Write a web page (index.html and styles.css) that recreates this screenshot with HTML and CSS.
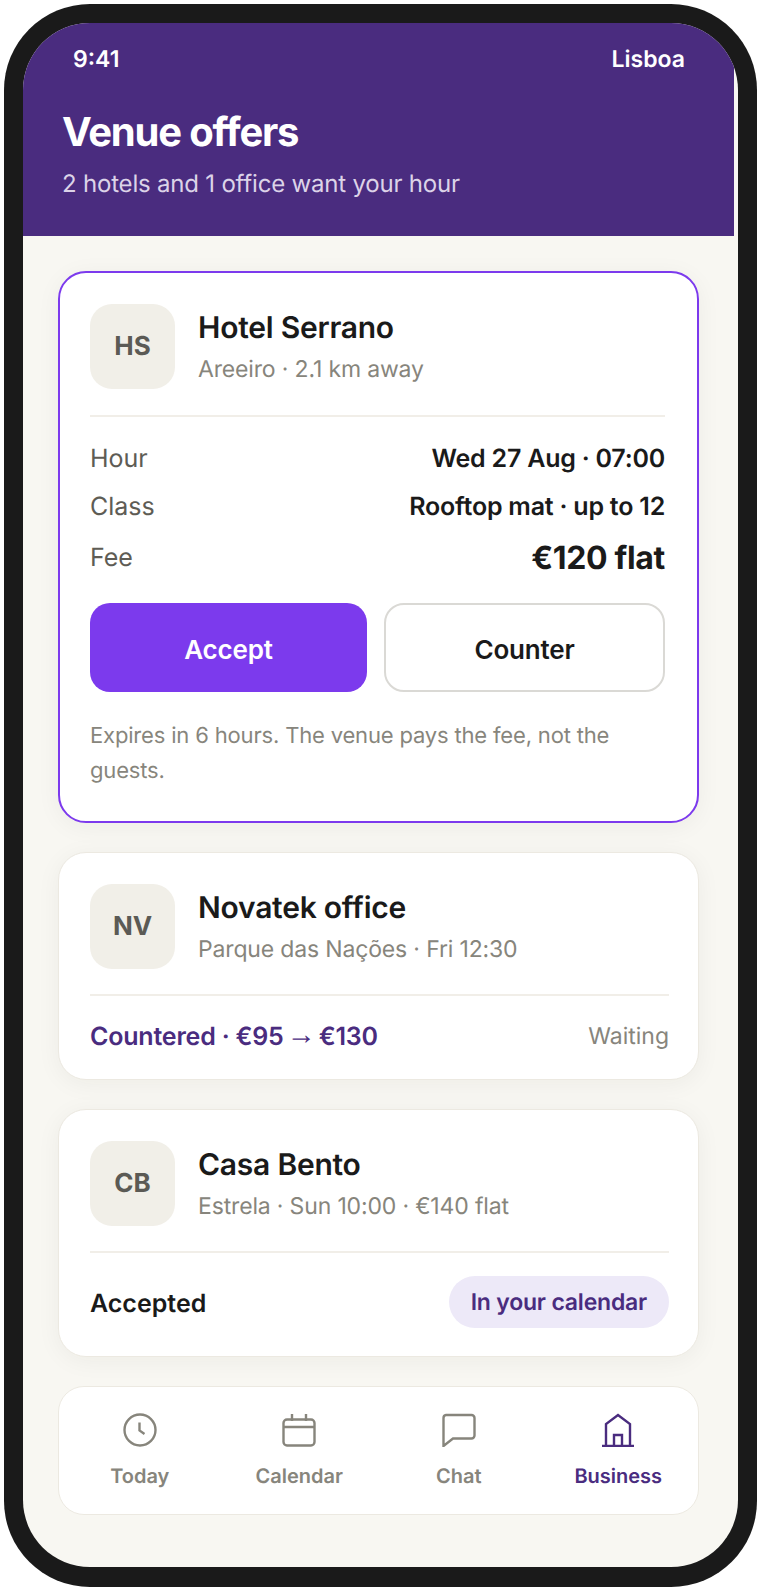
FILE: index.html
```html
<!DOCTYPE html>
<html lang="en">
<head>
    <meta charset="UTF-8">
    <meta name="viewport" content="width=device-width, initial-scale=1.0">
    <title>Venue offers</title>
    <link rel="stylesheet" href="styles.css">
</head>
<body>
    <div class="phone">
        <div class="screen">
            <!-- Purple header with status line -->
            <header class="top">
                <div class="status">
                    <span>9:41</span>
                    <span>Lisboa</span>
                </div>
                <h1>Venue offers</h1>
                <p class="lead">2 hotels and 1 office want your hour</p>
            </header>

            <main class="content">
                <section class="card card-main">
                    <div class="venue">
                        <div class="avatar">HS</div>
                        <div>
                            <div class="name">Hotel Serrano</div>
                            <div class="meta">Areeiro · 2.1 km away</div>
                        </div>
                    </div>
                    <div class="details">
                        <div class="line line-hour">
                            <span class="label">Hour</span>
                            <span class="value">Wed 27 Aug · 07:00</span>
                        </div>
                        <div class="line">
                            <span class="label">Class</span>
                            <span class="value">Rooftop mat · up to 12</span>
                        </div>
                        <div class="line line-fee">
                            <span class="label">Fee</span>
                            <span class="value fee">€120 flat</span>
                        </div>
                    </div>
                    <div class="actions">
                        <button class="btn btn-accept">Accept</button>
                        <button class="btn btn-counter">Counter</button>
                    </div>
                    <p class="note">Expires in 6 hours. The venue pays the fee, not the guests.</p>
                </section>

                <section class="card">
                    <div class="venue">
                        <div class="avatar">NV</div>
                        <div>
                            <div class="name">Novatek office</div>
                            <div class="meta">Parque das Nações · Fri 12:30</div>
                        </div>
                    </div>
                    <div class="outcome">
                        <span class="countered">Countered · €95 <span class="arrow">→</span> €130</span>
                        <span class="waiting">Waiting</span>
                    </div>
                </section>

                <section class="card">
                    <div class="venue">
                        <div class="avatar">CB</div>
                        <div>
                            <div class="name">Casa Bento</div>
                            <div class="meta">Estrela · Sun 10:00 · €140 flat</div>
                        </div>
                    </div>
                    <div class="outcome outcome-pill">
                        <span class="accepted">Accepted</span>
                        <span class="pill">In your calendar</span>
                    </div>
                </section>

                <!-- Bottom tabs -->
                <nav class="tabs">
                    <div class="tab">
                        <svg viewBox="0 0 34 34" width="34" height="34"><circle cx="17" cy="17" r="15.5"/><path d="M16.5 9.5V17.5L21.5 21"/></svg>
                        <span>Today</span>
                    </div>
                    <div class="tab">
                        <svg viewBox="0 0 34 34" width="34" height="34"><rect x="1.5" y="6.5" width="31" height="26" rx="3.5"/><path d="M1.5 14H32.5M10 1V8M24 1V8"/></svg>
                        <span>Calendar</span>
                    </div>
                    <div class="tab">
                        <svg viewBox="0 0 34 34" width="34" height="34"><path d="M4 2H29.5A3 3 0 0 1 32.5 5V22.5A3 3 0 0 1 29.5 25.5H11L1.5 33V5A3 3 0 0 1 4 2Z"/></svg>
                        <span>Chat</span>
                    </div>
                    <div class="tab tab-active">
                        <svg viewBox="0 0 34 34" width="34" height="34"><path d="M1 33H33M5 33V11L17 2L29 11V33M13 33V22H21V33"/></svg>
                        <span>Business</span>
                    </div>
                </nav>
            </main>
        </div>
    </div>
</body>
</html>
```

FILE: styles.css
```css
* {
    box-sizing: border-box;
}

body {
    margin: 0;
    background: #fff;
    font-family: Inter, "Liberation Sans", sans-serif;
    color: #1a1a1a;
    text-rendering: geometricPrecision;
}

.phone {
    width: 753px;
    height: 1583px;
    margin: 4px 0 0 4px;
    background: #1a1a1a;
    border-radius: 86px;
    padding: 19px 19px 20px;
}

.screen {
    height: 100%;
    background: #f8f7f2;
    border-radius: 67px;
    overflow: hidden;
    padding-right: 4px;
}

/* Header */
.top {
    height: 213px;
    background: #4a2c7f;
    color: #fff;
    padding: 22px 49px 0 39px;
}

.status {
    display: flex;
    justify-content: space-between;
    padding-left: 11px;
    font-size: 23px;
    font-weight: 600;
    line-height: 29px;
}

.top h1 {
    margin: 33px 0 0;
    font-size: 40px;
    font-weight: 700;
    line-height: 50px;
    letter-spacing: -1.2px;
}

.lead {
    margin: 12px 0 0;
    font-size: 24px;
    line-height: 30px;
    letter-spacing: -0.2px;
    color: #dcd3e8;
}

/* Cards */
.content {
    padding: 35px 35px 0;
    display: flex;
    flex-direction: column;
    gap: 29px;
}

.card {
    background: #fff;
    border: 1px solid #ece9e1;
    border-radius: 28px;
    padding: 31px 29px 0 31px;
    box-shadow: 0 4px 24px rgba(40, 35, 20, 0.05);
}

.card-main {
    height: 552px;
    border: 2px solid #7c3aed;
    padding: 31px 32px 0 30px;
}

.venue {
    display: flex;
    align-items: center;
    gap: 23px;
    padding-bottom: 25px;
    border-bottom: 2px solid #f1eee8;
}

.card-main .venue {
    padding-bottom: 26px;
}

.avatar {
    width: 85px;
    height: 85px;
    border-radius: 22px;
    background: #f1efe8;
    color: #5b5a55;
    font-size: 26px;
    font-weight: 700;
    display: flex;
    align-items: center;
    justify-content: center;
}

.name {
    font-size: 30px;
    font-weight: 600;
    line-height: 38px;
    letter-spacing: -0.24px;
}

.meta {
    margin-top: 7px;
    font-size: 23px;
    line-height: 30px;
    letter-spacing: -0.16px;
    color: #87857c;
}

/* Offer details */
.details {
    padding-top: 17px;
}

.line {
    display: flex;
    justify-content: space-between;
    align-items: center;
    height: 48px;
}

.line-hour {
    height: 49px;
}

.line-fee {
    height: 53px;
}

.label {
    font-size: 25px;
    color: #5e5c55;
}

.value {
    font-size: 25px;
    font-weight: 600;
    letter-spacing: -0.22px;
}

.fee {
    font-size: 32px;
    font-weight: 700;
    letter-spacing: -0.32px;
}

.actions {
    display: flex;
    justify-content: space-between;
    margin-top: 19px;
}

.btn {
    height: 89px;
    padding: 3px 0 0;
    border-radius: 20px;
    font-family: inherit;
    font-size: 26px;
    font-weight: 600;
    letter-spacing: -0.2px;
}

.btn-accept {
    width: 277px;
    border: none;
    background: #7c3aed;
    color: #fff;
}

.btn-counter {
    width: 281px;
    border: 2px solid #dad9d5;
    background: #fff;
    color: #1a1a1a;
}

.note {
    margin: 27px 0 0;
    font-size: 22px;
    line-height: 35px;
    letter-spacing: -0.17px;
    color: #87857c;
}

/* Status rows of the other two cards */
.outcome {
    display: flex;
    justify-content: space-between;
    align-items: center;
    height: 83px;
    padding-bottom: 2px;
}

.outcome-pill {
    height: 103px;
    padding-bottom: 6px;
}

.countered {
    font-size: 25px;
    font-weight: 600;
    letter-spacing: -0.2px;
    line-height: 30px;
    color: #4a2c7f;
}

/* Smaller arrow head than the one in Inter */
.arrow {
    font-family: "Liberation Sans", sans-serif;
    font-size: 29px;
    line-height: 20px;
    vertical-align: 1px;
    margin: 0 -3px;
}

.waiting {
    margin-bottom: 2px;
    font-size: 23px;
    color: #87857c;
}

.accepted {
    margin-top: 4px;
    font-size: 25px;
    font-weight: 600;
}

.pill {
    padding: 0 22px;
    height: 52px;
    line-height: 52px;
    border-radius: 26px;
    background: #ede9f8;
    color: #4a2c7f;
    font-size: 23px;
    font-weight: 600;
    letter-spacing: -0.2px;
}

/* Bottom tabs */
.tabs {
    height: 129px;
    background: #fff;
    border: 1px solid #ece9e1;
    border-radius: 26px;
    display: grid;
    grid-template-columns: repeat(4, 1fr);
    padding: 26px 0 0 1px;
}

.tab {
    display: flex;
    flex-direction: column;
    align-items: center;
    font-size: 20px;
    font-weight: 600;
    color: #87857c;
}

.tab svg {
    fill: none;
    stroke: currentColor;
    stroke-width: 2.4;
    margin-bottom: 17px;
}

.tab-active {
    color: #4a2c7f;
}
```
